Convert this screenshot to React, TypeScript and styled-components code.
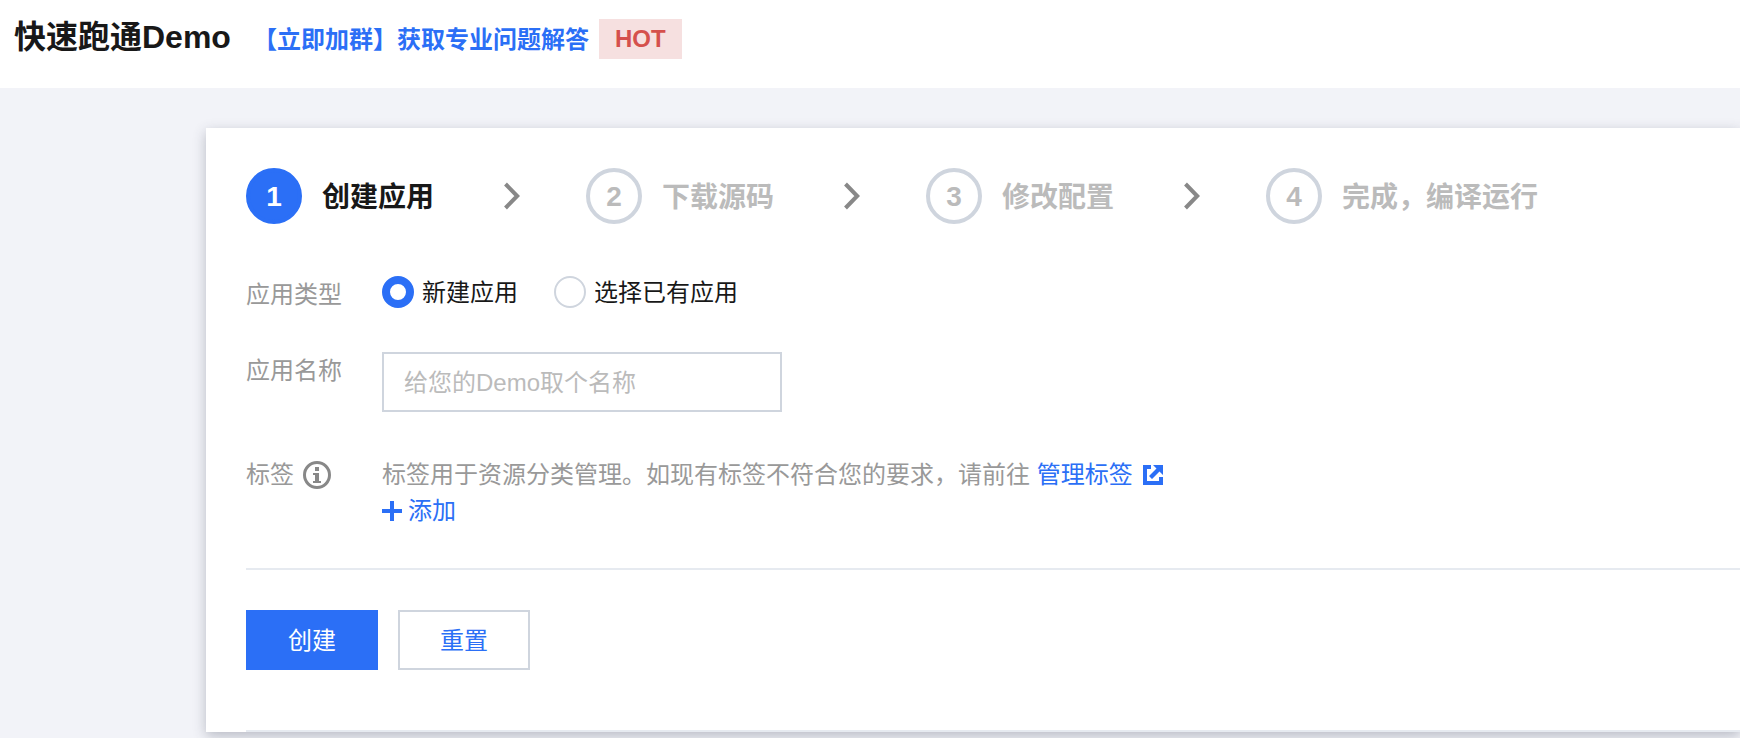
import React from "react";
import styled, { createGlobalStyle } from "styled-components";

const GlobalStyle = createGlobalStyle`
  * { box-sizing: border-box; }
  body {
    margin: 0;
    background: #f2f3f8;
    color: #181818;
    font-family: "Liberation Sans", "Noto Sans CJK SC", sans-serif;
    font-size: 24px;
    line-height: 36px;
  }
  button, input { font: inherit; }
  a { color: #2b6ff6; text-decoration: none; }
`;

const Page = styled.div`
  display: flex;
  flex-direction: column;
  min-height: 100vh;
`;

const Header = styled.header`
  display: flex;
  align-items: flex-start;
  height: 88px;
  padding: 19px 14px;
  background: #fff;
`;

const Title = styled.h1`
  margin: 0 22px 0 0;
  font-size: 32px;
  line-height: 36px;
  font-weight: 700;
`;

const GroupLink = styled.a`
  font-weight: 700;
  line-height: 42px;
`;

const HotBadge = styled.span`
  margin-left: 10px;
  padding: 0 16px;
  line-height: 40px;
  font-weight: 700;
  color: #d5504c;
  background: #f6e0e0;
`;

const Card = styled.main`
  margin: 40px 0 6px 206px;
  padding: 40px 0 0 40px;
  background: #fff;
  box-shadow: 0 4px 12px rgba(54, 58, 80, 0.3);
`;

const Steps = styled.ol`
  display: flex;
  align-items: center;
  margin: 0 0 52px;
  padding: 0;
  list-style: none;
  white-space: nowrap;
`;

const Step = styled.li<{ $active?: boolean }>`
  display: flex;
  align-items: center;
  gap: 20px;
  font-size: 28px;
  font-weight: 700;
  color: ${(p) => (p.$active ? "#181818" : "#bbb")};
`;

const StepName = styled.span`
  padding-top: 4px;
`;

const StepNumber = styled.span<{ $active?: boolean }>`
  display: flex;
  align-items: center;
  justify-content: center;
  width: 56px;
  height: 56px;
  padding-top: 2px;
  border: 4px solid ${(p) => (p.$active ? "#2b6ff6" : "#cfd5de")};
  border-radius: 50%;
  background: ${(p) => (p.$active ? "#2b6ff6" : "#fff")};
  color: ${(p) => (p.$active ? "#fff" : "#bbb")};
`;

const Chevron = styled.svg`
  flex: none;
  width: 16px;
  height: 28px;
  margin: 0 66px 0 50px;
`;

const Row = styled.div`
  display: grid;
  grid-template-columns: 136px minmax(0, 1fr);
  margin-bottom: 38px;
`;

const RowLabel = styled.div`
  display: flex;
  align-items: center;
  gap: 9px;
  height: 38px;
  color: #999;
`;

const RadioGroup = styled.div`
  display: flex;
  gap: 36px;
`;

const RadioLabel = styled.label`
  display: flex;
  align-items: center;
  gap: 8px;
  height: 32px;
`;

const RadioText = styled.span`
  padding-top: 2px;
`;

const Radio = styled.input`
  appearance: none;
  width: 32px;
  height: 32px;
  margin: 0;
  border: 2px solid #cfd5de;
  border-radius: 50%;
  background: #fff;
  &:checked { border: 8px solid #2b6ff6; }
`;

const TextInput = styled.input`
  width: 400px;
  height: 60px;
  margin: 0 0 6px;
  padding: 2px 20px 0;
  border: 2px solid #cfd5de;
  border-radius: 0;
  background: #fff;
  color: #181818;
  outline: none;
  &::placeholder { color: #bbb; opacity: 1; }
`;

const TagField = styled.div`
  padding: 1px 0;
`;

const Hint = styled.p`
  margin: 0;
  color: #999;
`;

const ExternalIcon = styled.svg`
  width: 20px;
  height: 20px;
  margin-left: 10px;
  vertical-align: -2px;
`;

const AddButton = styled.button`
  display: flex;
  align-items: center;
  gap: 6px;
  padding: 0;
  border: 0;
  background: none;
  color: #2b6ff6;
`;

const Actions = styled.div`
  display: flex;
  gap: 20px;
  padding: 40px 0 60px;
  border: solid #e6eaf0;
  border-width: 2px 0;
`;

const Button = styled.button<{ $primary?: boolean }>`
  width: 132px;
  height: 60px;
  padding: 2px 0 0;
  border: 2px solid ${(p) => (p.$primary ? "#2b6ff6" : "#cfd5de")};
  background: ${(p) => (p.$primary ? "#2b6ff6" : "#fff")};
  color: ${(p) => (p.$primary ? "#fff" : "#2b6ff6")};
`;

const steps = ["创建应用", "下载源码", "修改配置", "完成，编译运行"];

export default function App() {
  return (
    <Page lang="zh-CN">
      <GlobalStyle />
      <Header>
        <Title>快速跑通Demo</Title>
        <GroupLink href="#group">【立即加群】获取专业问题解答</GroupLink>
        <HotBadge>HOT</HotBadge>
      </Header>
      <Card>
        <Steps>
          {steps.map((name, i) => (
            <Step key={name} $active={i === 0}>
              <StepNumber $active={i === 0}>{i + 1}</StepNumber>
              <StepName>{name}</StepName>
              {i < steps.length - 1 && (
                <Chevron viewBox="0 0 16 28" aria-hidden="true">
                  <path d="M1.5 2L13.2 14L1.5 26" fill="none" stroke="#888" strokeWidth="4" />
                </Chevron>
              )}
            </Step>
          ))}
        </Steps>
        <Row>
          <RowLabel id="type-label">应用类型</RowLabel>
          <RadioGroup role="radiogroup" aria-labelledby="type-label">
            <RadioLabel>
              <Radio type="radio" name="type" defaultChecked />
              <RadioText>新建应用</RadioText>
            </RadioLabel>
            <RadioLabel>
              <Radio type="radio" name="type" />
              <RadioText>选择已有应用</RadioText>
            </RadioLabel>
          </RadioGroup>
        </Row>
        <Row>
          <RowLabel as="label" htmlFor="app-name">应用名称</RowLabel>
          <TextInput id="app-name" type="text" placeholder="给您的Demo取个名称" />
        </Row>
        <Row>
          <RowLabel>
            标签
            <svg width="28" height="28" viewBox="0 0 28 28" aria-hidden="true">
              <circle cx="14" cy="14" r="12.5" fill="none" stroke="#888" strokeWidth="3" />
              <path d="M12 6h4v4h-4zM10 12h6v8h2v2h-8v-2h2v-6h-2z" fill="#888" />
            </svg>
          </RowLabel>
          <TagField>
            <Hint>
              标签用于资源分类管理。如现有标签不符合您的要求，请前往{" "}
              <a href="#tags">
                管理标签
                <ExternalIcon viewBox="0 0 20 20" aria-hidden="true">
                  <path
                    d="M0 0H8V4H4V16H16V12H20V20H0ZM10 0H20V10L16.5 6.5L9 14L6 11L13.5 3.5Z"
                    fill="#2b6ff6"
                  />
                </ExternalIcon>
              </a>
            </Hint>
            <AddButton type="button">
              <svg width="20" height="20" viewBox="0 0 20 20" aria-hidden="true">
                <path d="M8 0h4v8h8v4h-8v8H8v-8H0V8h8z" fill="#2b6ff6" />
              </svg>
              添加
            </AddButton>
          </TagField>
        </Row>
        <Actions>
          <Button type="button" $primary>创建</Button>
          <Button type="button">重置</Button>
        </Actions>
      </Card>
    </Page>
  );
}
